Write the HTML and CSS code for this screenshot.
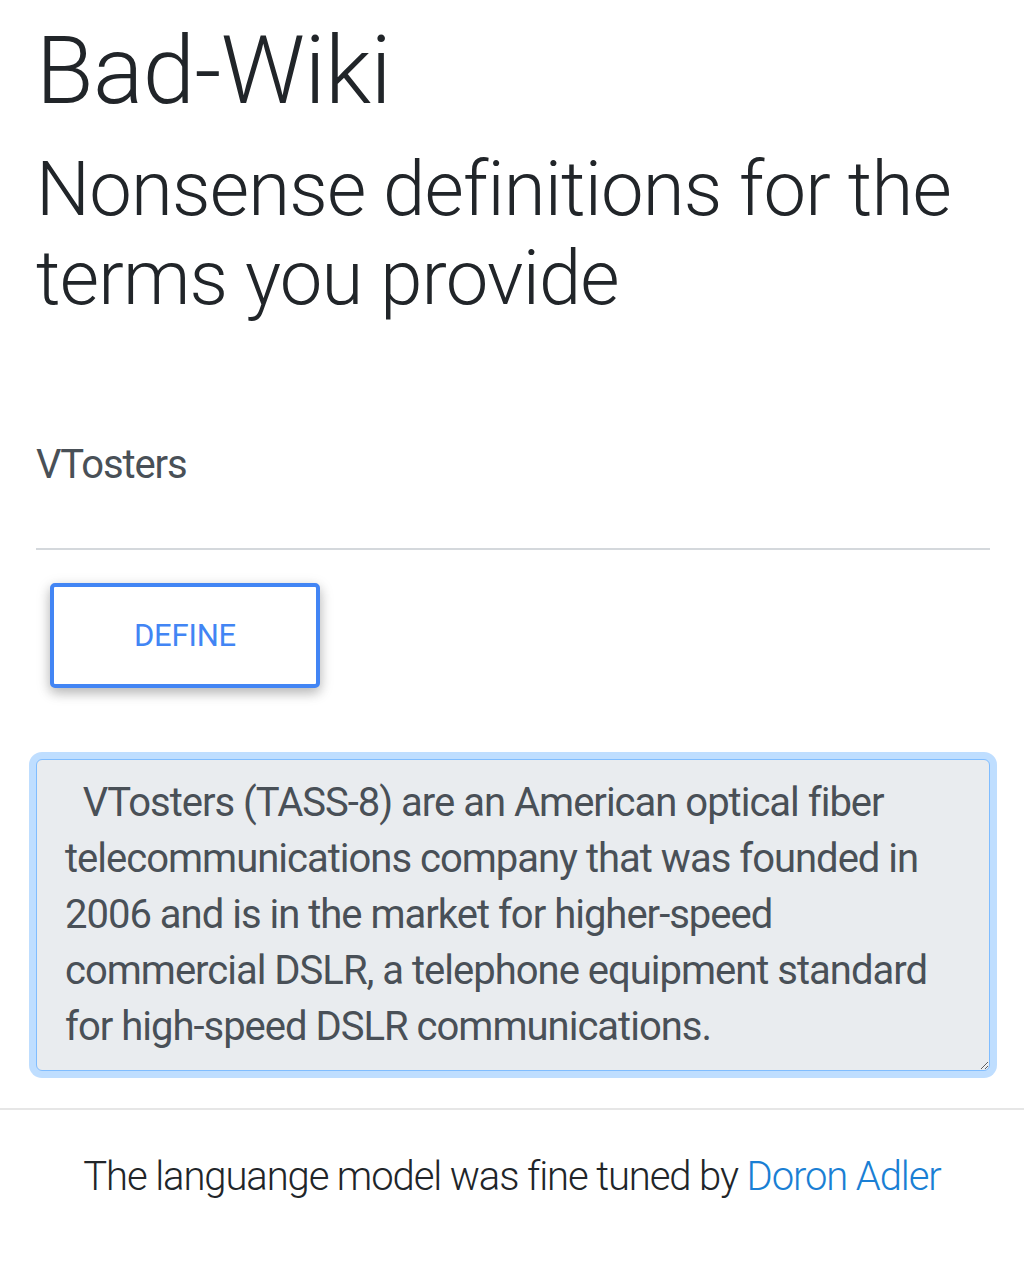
FILE: index.html
```html
<!DOCTYPE html>
<html lang="en">
<head>
    <meta charset="UTF-8">
    <meta name="viewport" content="width=device-width, initial-scale=1.0">
    <title>Bad-Wiki</title>
    <link rel="stylesheet" href="styles.css">
</head>
<body>
    <div class="container">
        <h1 class="title">Bad-Wiki</h1>
        <h2 class="subtitle">Nonsense definitions for the terms you provide</h2>

        <!-- Term input -->
        <div class="form-group">
            <input type="text" class="term-input" value="VTosters">
        </div>

        <button class="btn-define">Define</button>

        <!-- Generated definition -->
        <textarea class="definition" rows="5" readonly>  VTosters (TASS-8) are an American optical fiber telecommunications company that was founded in 2006 and is in the market for higher-speed commercial DSLR, a telephone equipment standard for high-speed DSLR communications.</textarea>
    </div>

    <hr class="divider">

    <footer class="footer">
        The languange model was fine tuned by <a href="#">Doron Adler</a>
    </footer>
</body>
</html>
```

FILE: styles.css
```css
body {
    margin: 0;
    font-family: Roboto, "Noto Sans", sans-serif;
    color: #212529;
    background-color: #fff;
}

.container {
    padding: 0 34px 0 36px;
}

.title {
    margin: 15px 0 0;
    font-size: 94px;
    line-height: 113px;
    font-weight: 300;
    letter-spacing: -0.6px;
}

.subtitle {
    margin: 17px 0 0;
    font-size: 76px;
    line-height: 89px;
    font-weight: 300;
    letter-spacing: -0.8px;
}

.form-group {
    margin-top: 117px;
}

.term-input {
    display: block;
    width: 100%;
    box-sizing: border-box;
    margin: 0;
    padding: 0 0 60px;
    border: none;
    border-bottom: 2px solid #d4d8dc;
    font-family: Roboto, sans-serif;
    font-size: 40px;
    line-height: 48px;
    height: 110px;
    letter-spacing: -1.1px;
    color: #495057;
    background: transparent;
    outline: none;
}

.btn-define {
    display: block;
    margin: 33px 0 0 14px;
    width: 270px;
    height: 105px;
    border: 4px solid #4285f4;
    border-radius: 5px;
    background: #fff;
    color: #4285f4;
    font-family: Roboto, sans-serif;
    font-size: 31px;
    text-transform: uppercase;
    letter-spacing: -0.2px;
    box-shadow: 0 5px 11px 0 rgba(0,0,0,0.18), 0 4px 15px 0 rgba(0,0,0,0.15);
    cursor: pointer;
}

.definition {
    display: block;
    width: 100%;
    box-sizing: border-box;
    margin-top: 71px;
    padding: 15px 28px 14px;
    height: 312px;
    border: 1px solid #80bdff;
    border-radius: 6px;
    background-color: #e9ecef;
    box-shadow: 0 0 0 7px rgba(0,123,255,0.25);
    font-family: Roboto, sans-serif;
    font-size: 40px;
    line-height: 56px;
    letter-spacing: -1px;
    color: #495057;
    white-space: pre-wrap;
    outline: none;
}

.divider {
    margin: 37px 0 0;
    border: none;
    border-top: 2px solid #e6e6e6;
}

.footer {
    padding-top: 39px;
    text-align: center;
    font-size: 40px;
    line-height: 56px;
    font-weight: 300;
    letter-spacing: -1.1px;
}

.footer a {
    color: #1a7fd4;
    text-decoration: none;
}
```
